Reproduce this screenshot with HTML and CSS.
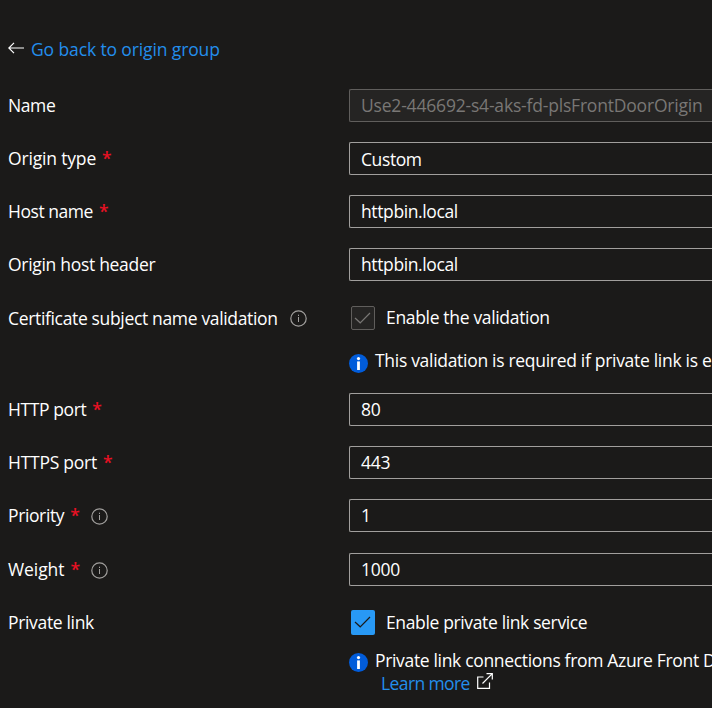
FILE: index.html
```html
<!DOCTYPE html>
<html lang="en">
<head>
<meta charset="utf-8">
<title>Update origin</title>
<link rel="stylesheet" href="styles.css">
</head>
<body>
<svg class="defs" width="0" height="0" aria-hidden="true">
  <symbol id="info" viewBox="0 0 17 17"><circle cx="8.5" cy="8.5" r="7.7" fill="none" stroke="currentColor" stroke-width="1.2"/><path d="M8.5 7v5M8.5 4.7v1.3" stroke="currentColor"/></symbol>
  <symbol id="info-fill" viewBox="0 0 19 19"><circle cx="9.5" cy="9.5" r="9.5" fill="#015cda"/><circle cx="9.5" cy="4.6" r="1.6" fill="#fff"/><path d="M8.1 7.4h2.8v8.6H8.1z" fill="#fff"/></symbol>
  <symbol id="check" viewBox="0 0 24 24"><path d="M4 12l5.2 4.8L19 7" fill="none" stroke="currentColor" stroke-width="1.2"/></symbol>
</svg>
<main class="form">
  <a class="back" href="#"><svg class="arrow" viewBox="0 0 16 12"><path d="M16 6H1M6 .8L.8 6 6 11.2" fill="none" stroke="currentColor" stroke-width="1.2"/></svg><span class="t-back">Go back to origin group</span></a>
  <div class="row"><label class="t-name">Name</label><div class="field disabled"><span class="t-id">Use2-446692-s4-aks-fd-plsFrontDoorOrigin</span></div></div>
  <div class="row"><label class="t-type">Origin type</label><i class="req">*</i><div class="field low"><span class="t-custom">Custom</span></div></div>
  <div class="row"><label class="t-host">Host name</label><i class="req">*</i><div class="field"><span class="t-local">httpbin.local</span></div></div>
  <div class="row"><label class="t-header">Origin host header</label><div class="field"><span class="t-local">httpbin.local</span></div></div>
  <div class="row check-row"><label class="t-cert">Certificate subject name validation</label><svg class="info"><use href="#info"/></svg><div class="choice"><span class="box off"><svg><use href="#check"/></svg></span><span class="t-enable">Enable the validation</span></div></div>
  <div class="note first"><svg class="badge"><use href="#info-fill"/></svg><p class="t-required">This validation is required if private link is e</p></div>
  <div class="row"><label class="t-http">HTTP port</label><i class="req">*</i><div class="field"><span class="t-num">80</span></div></div>
  <div class="row"><label class="t-https">HTTPS port</label><i class="req">*</i><div class="field"><span class="t-num">443</span></div></div>
  <div class="row"><label class="t-priority">Priority</label><i class="req">*</i><svg class="info"><use href="#info"/></svg><div class="field"><span class="t-num">1</span></div></div>
  <div class="row weight"><label class="t-weight">Weight</label><i class="req">*</i><svg class="info"><use href="#info"/></svg><div class="field disabled-none"><span class="t-num">1000</span></div></div>
  <div class="row"><label class="t-private">Private link</label><div class="choice"><span class="box on"><svg><use href="#check"/></svg></span><span class="t-service">Enable private link service</span></div></div>
  <div class="note second"><svg class="badge"><use href="#info-fill"/></svg><div><p class="t-connect">Private link connections from Azure Front D</p><a class="learn" href="#"><span class="t-learn">Learn more</span><svg class="external" viewBox="0 0 16 16"><path d="M6.5 4H.7v11.3h11.8V9.5M5.5 10.5L15.3.7M9.5.7h5.8v5.8" fill="none" stroke="currentColor" stroke-width="1.2"/></svg></a></div></div>
</main>
</body>
</html>
```
FILE: styles.css
```css
* { box-sizing: border-box; }
body {
  margin: 0;
  height: 708px;
  overflow: hidden;
  background: #1b1a19;
  color: #fff;
  font: 17.5px/24px "Open Sans", "Noto Sans", sans-serif;
  letter-spacing: -0.25px;
  white-space: nowrap;
}
.defs { position: absolute; }
.form { padding: 37px 0 0 8px; }
.back { display: flex; align-items: center; height: 24px; margin-bottom: 28px; color: #238eec; text-decoration: none; }
.arrow { width: 16px; height: 12px; margin: -2px 7px 0 0; color: #fff; }
.row { display: grid; grid-template-columns: auto auto 1fr 363px; align-items: center; height: 33px; margin-bottom: 20px; }
.row > * { grid-row: 1; }
.row > label { padding-bottom: 2px; }
.check-row > label { padding-bottom: 0; }
.req { width: 9px; margin-left: 6px; padding-bottom: 2px; color: #e81123; font-style: normal; font-weight: 600; letter-spacing: 0; }
.info { width: 17px; height: 17px; margin: 2px 0 0 12px; color: #a19f9d; }
.field, .choice { display: flex; align-items: center; grid-column: 4; width: 363px; height: 33px; }
.field { border: 1px solid #a19f9d; border-right: 0; border-radius: 2px 0 0 2px; padding: 0 0 1px 11px; }
.field.low { padding-bottom: 0; }
.field.disabled { background: #252423; border-color: #605e5c; color: #797775; padding-bottom: 2px; }
.check-row { margin-bottom: 16px; }
.choice > span:last-child { padding-bottom: 2px; }
.box { width: 24px; height: 24px; margin: 0 11px 0 2px; border-radius: 2px; }
.box svg { display: block; width: 24px; height: 24px; }
.off { border: 1px solid #605e5c; background: #252423; color: #797775; }
.off svg { margin: -1px; }
.on { background: #2899f5; color: #1b1a19; height: 25px; }
.note { display: flex; margin-left: 341px; overflow: hidden; }
.note p { margin: -1px 0 0; }
.first { height: 43px; }
.first p { margin-top: -2px; }
.badge { width: 19px; height: 19px; margin: 4px 7px 0 0; flex: none; }
.weight { margin-top: 21px; }
.weight .t-num { margin-top: -1px; }
.second { margin-top: -10px; }
.learn { display: flex; height: 23px; margin: -1px 0 0 6px; color: #238eec; text-decoration: none; }
.external { width: 16px; height: 16px; margin: 2px 0 0 7px; color: #fff; }

.t-back { letter-spacing: -0.12px; }
.t-name, .t-custom { letter-spacing: -0.4px; }
.t-id { letter-spacing: -0.19px; }
.t-type { letter-spacing: -0.17px; }
.t-host { letter-spacing: -0.45px; }
.t-header, .t-required { letter-spacing: -0.3px; }
.t-cert { letter-spacing: -0.34px; }
.t-enable, .t-private, .t-connect { letter-spacing: -0.33px; }
.t-http { letter-spacing: -0.4px; }
.t-priority, .t-local { letter-spacing: -0.38px; }
.t-weight { letter-spacing: -0.08px; }
.t-service { letter-spacing: -0.36px; }
.t-learn { letter-spacing: -0.6px; }
```
